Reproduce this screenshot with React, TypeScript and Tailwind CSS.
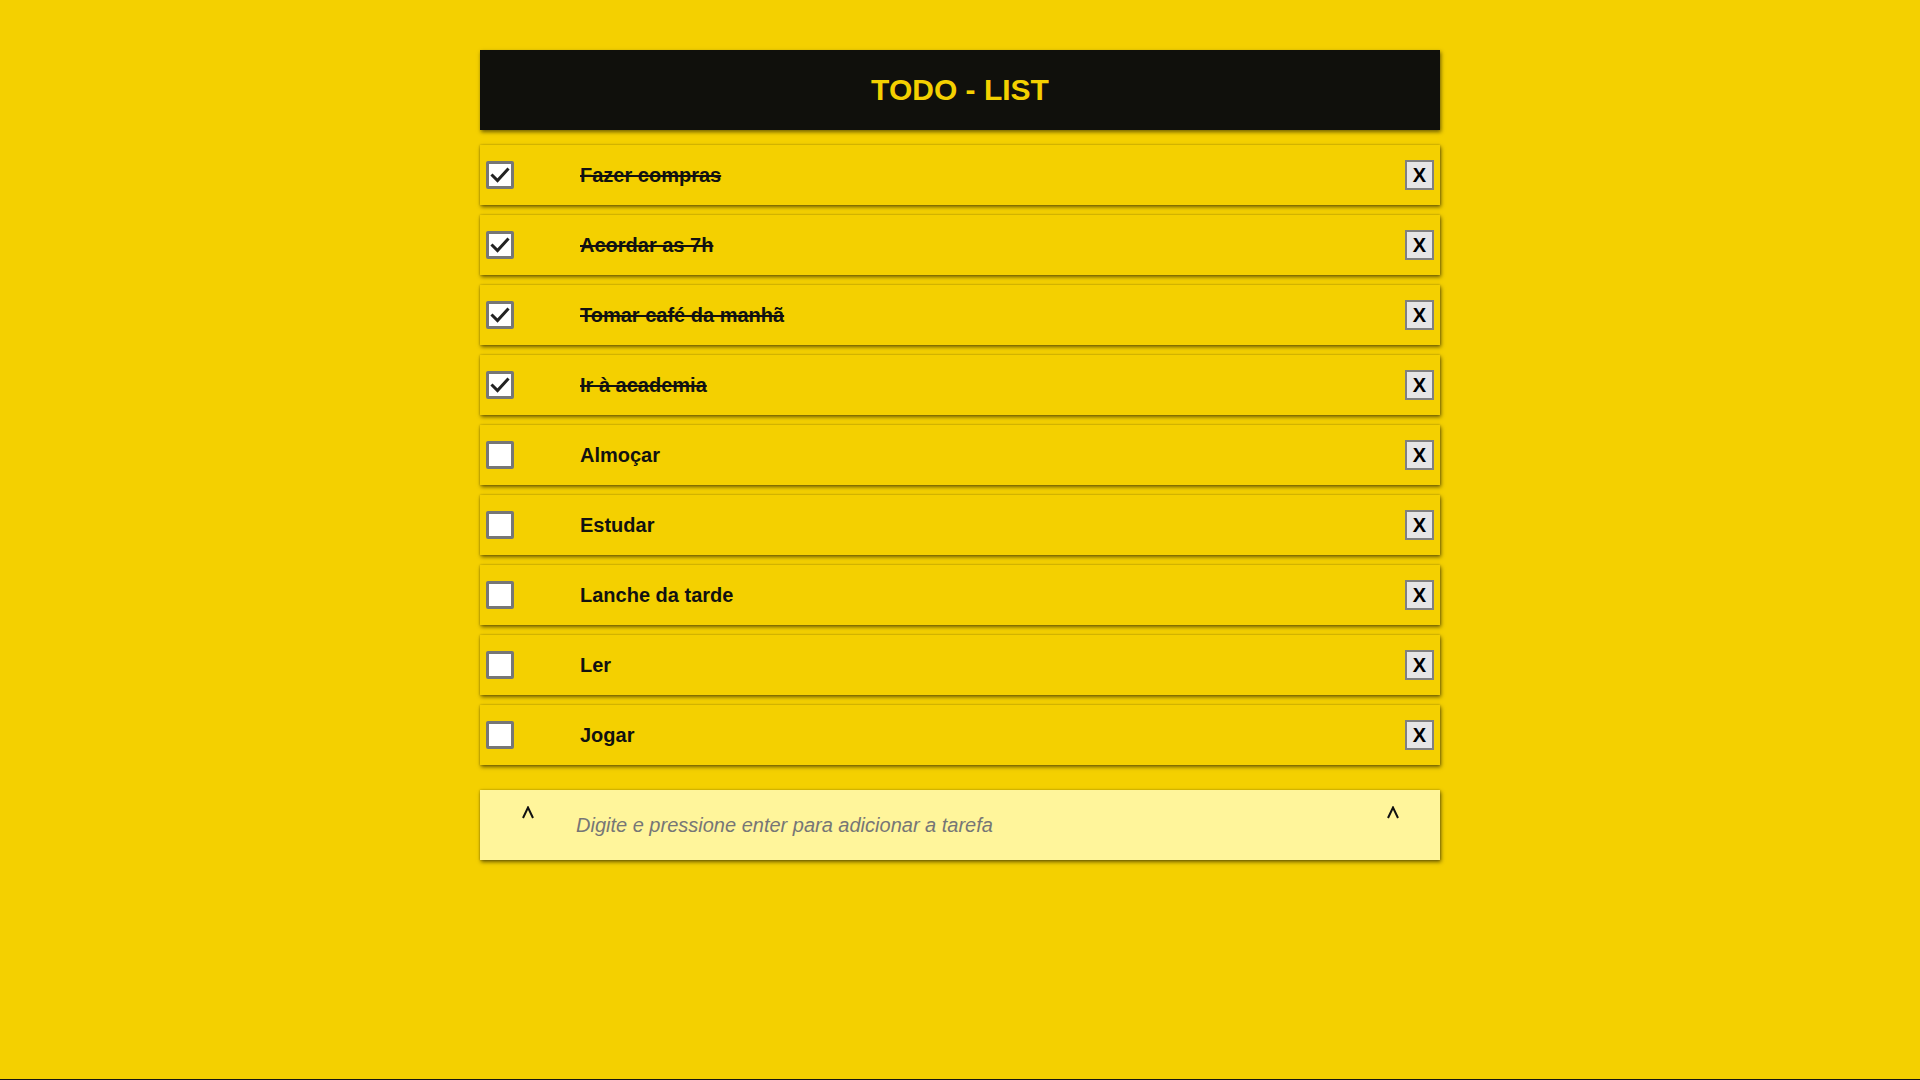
import React from "react";

const tasks: { text: string; done: boolean }[] = [
  { text: "Fazer compras", done: true },
  { text: "Acordar as 7h", done: true },
  { text: "Tomar café da manhã", done: true },
  { text: "Ir à academia", done: true },
  { text: "Almoçar", done: false },
  { text: "Estudar", done: false },
  { text: "Lanche da tarde", done: false },
  { text: "Ler", done: false },
  { text: "Jogar", done: false },
];

function Check({ checked }: { checked: boolean }) {
  return (
    <div className="w-[28px] h-[28px] border-[3px] border-[#767676] bg-white flex items-center justify-center rounded-[2px]">
      {checked && (
        <svg width="22" height="22" viewBox="0 0 22 22">
          <path d="M3.5 11.5 L8.5 16.5 L18.5 5.5" fill="none" stroke="#222" strokeWidth="3" strokeLinecap="square" />
        </svg>
      )}
    </div>
  );
}

function Caret() {
  return (
    <svg width="12" height="13" viewBox="0 0 12 13" className="mt-[16px]">
      <path d="M1 12 L6 1.5 L11 12" fill="none" stroke="#111" strokeWidth="2" />
    </svg>
  );
}

export default function App() {
  return (
    <div className="w-full" style={{ fontFamily: '"Liberation Sans", Arial, sans-serif' }}>
      <div className="h-[1079px] bg-[#f4d000] flex flex-col items-center pt-[50px]">
        <div className="w-[960px] flex flex-col">
          <div className="h-[80px] bg-[#10100c] flex items-center justify-center shadow-[1px_2px_4px_rgba(0,0,0,0.55)]">
            <h1 className="text-[30px] font-bold text-[#f4d000] leading-none">TODO - LIST</h1>
          </div>
          <div className="flex flex-col gap-[10px] mt-[15px]">
            {tasks.map((t) => (
              <div
                key={t.text}
                className="h-[60px] bg-[#f4d000] flex items-center pl-[6px] pr-[6px] shadow-[1px_2px_4px_rgba(0,0,0,0.55),0_0_2px_rgba(0,0,0,0.25)]"
              >
                <Check checked={t.done} />
                <span
                  className={`ml-[66px] text-[20px] font-bold text-[#111] leading-none ${t.done ? "line-through" : ""}`}
                >
                  {t.text}
                </span>
                <button className="ml-auto w-[29px] h-[30px] bg-[#e6e6e6] border-2 border-[#808080] flex items-center justify-center text-[20px] font-bold text-black leading-none">
                  X
                </button>
              </div>
            ))}
          </div>
          <div className="mt-[25px] h-[70px] bg-[#fff59b] flex shadow-[1px_2px_4px_rgba(0,0,0,0.55),0_0_2px_rgba(0,0,0,0.25)]">
            <div className="ml-[42px]">
              <Caret />
            </div>
            <div className="ml-[42px] flex items-center text-[20px] italic text-[#767676] leading-none">
              Digite e pressione enter para adicionar a tarefa
            </div>
            <div className="ml-auto mr-[41px]">
              <Caret />
            </div>
          </div>
        </div>
      </div>
      <div className="h-px bg-[#141414]" />
    </div>
  );
}
